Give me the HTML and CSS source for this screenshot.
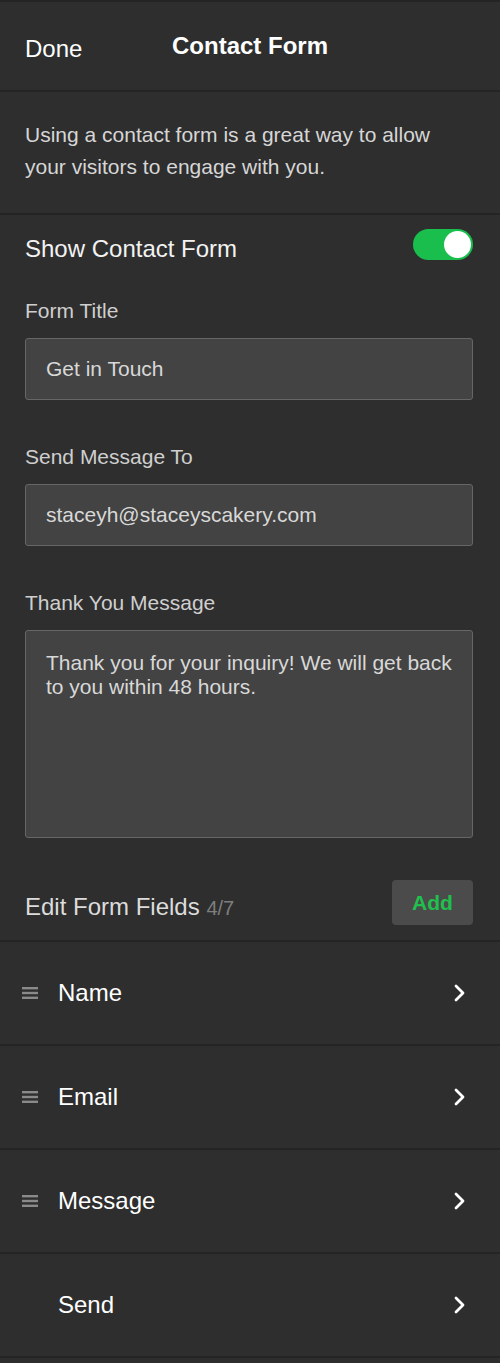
FILE: index.html
```html
<!DOCTYPE html>
<html lang="en">
  <head>
    <meta charset="UTF-8" />
    <meta name="viewport" content="width=device-width, initial-scale=1.0"/>
    <title>Contact Form</title>
    <link rel="stylesheet" href="styles.css">
  </head>
  <body>
    <div class="panel">
      <div class="header">
        <a class="done" href="#">Done</a>
        <h1>Contact Form</h1>
        <span></span>
      </div>

      <p class="intro">Using a contact form is a great way to allow your visitors to engage with you.</p>

      <div class="settings">
        <div class="switch-row">
          <span class="switch-label">Show Contact Form</span>
          <span class="toggle"><span class="knob"></span></span>
        </div>

        <label for="formTitle">Form Title</label>
        <input type="text" id="formTitle" value="Get in Touch" />

        <label for="sendTo">Send Message To</label>
        <input type="text" id="sendTo" value="staceyh@staceyscakery.com" />

        <label for="thanks">Thank You Message</label>
        <textarea id="thanks">Thank you for your inquiry! We will get back to you within 48 hours.</textarea>

        <div class="fields-head">
          <span class="fields-title">Edit Form Fields <span class="count">4/7</span></span>
          <button type="button">Add</button>
        </div>
      </div>

      <ul class="fields">
        <li>
          <svg class="handle" width="16" height="12" viewBox="0 0 16 12"><rect y="0" width="16" height="2.4"/><rect y="4.8" width="16" height="2.4"/><rect y="9.6" width="16" height="2.4"/></svg>
          <span class="name">Name</span>
          <svg class="chevron" width="14" height="18" viewBox="0 0 14 18"><polyline points="3,2 10,9 3,16"/></svg>
        </li>
        <li>
          <svg class="handle" width="16" height="12" viewBox="0 0 16 12"><rect y="0" width="16" height="2.4"/><rect y="4.8" width="16" height="2.4"/><rect y="9.6" width="16" height="2.4"/></svg>
          <span class="name">Email</span>
          <svg class="chevron" width="14" height="18" viewBox="0 0 14 18"><polyline points="3,2 10,9 3,16"/></svg>
        </li>
        <li>
          <svg class="handle" width="16" height="12" viewBox="0 0 16 12"><rect y="0" width="16" height="2.4"/><rect y="4.8" width="16" height="2.4"/><rect y="9.6" width="16" height="2.4"/></svg>
          <span class="name">Message</span>
          <svg class="chevron" width="14" height="18" viewBox="0 0 14 18"><polyline points="3,2 10,9 3,16"/></svg>
        </li>
        <li>
          <span class="handle-space"></span>
          <span class="name">Send</span>
          <svg class="chevron" width="14" height="18" viewBox="0 0 14 18"><polyline points="3,2 10,9 3,16"/></svg>
        </li>
      </ul>
    </div>
  </body>
</html>
```

FILE: styles.css
```css
body {
  margin: 0;
  background: #2e2e2e;
  font-family: "Liberation Sans", Arial, sans-serif;
  color: #fff;
}

.panel {
  border-top: 2px solid #242424;
}

.header {
  display: grid;
  grid-template-columns: 1fr auto 1fr;
  align-items: center;
  height: 88px;
  padding: 0 25px;
  border-bottom: 2px solid #242424;
}

.done {
  color: #fff;
  text-decoration: none;
  font-size: 24px;
  margin-top: 6px;
}

h1 {
  margin: 0;
  font-size: 24px;
  font-weight: bold;
  color: #fff;
}

.intro {
  margin: 0;
  padding: 27px 25px 30px;
  font-size: 21px;
  line-height: 32px;
  color: #d6d6d6;
  border-bottom: 2px solid #242424;
}

.settings {
  padding: 14px 27px 15px 25px;
  display: flex;
  flex-direction: column;
}

.switch-row {
  display: flex;
  justify-content: space-between;
  align-items: flex-start;
  margin-bottom: 36px;
}

.switch-label {
  font-size: 24px;
  line-height: 31px;
  padding-top: 4px;
  color: #f2f2f2;
}

.toggle {
  display: flex;
  justify-content: flex-end;
  align-items: center;
  width: 60px;
  height: 31px;
  padding: 0 2px;
  box-sizing: border-box;
  background: #19be4c;
  border-radius: 16px;
}

.knob {
  width: 27px;
  height: 27px;
  border-radius: 50%;
  background: #fff;
}

label {
  display: block;
  font-size: 21px;
  line-height: 22px;
  color: #cfcfcf;
  margin-bottom: 16px;
}

input[type="text"],
textarea {
  box-sizing: border-box;
  width: 100%;
  height: 62px;
  margin: 0 0 46px;
  padding: 0 20px;
  font-family: inherit;
  font-size: 21px;
  color: #d8d8d8;
  background: #434343;
  border: 1.5px solid #666;
  border-radius: 3px;
  outline: none;
}

textarea {
  height: 208px;
  padding: 20px 20px;
  line-height: 24px;
  resize: none;
  margin-bottom: 42px;
}

.fields-head {
  display: flex;
  justify-content: space-between;
  align-items: center;
}

.fields-title {
  font-size: 24px;
  color: #dcdcdc;
  margin-top: 8px;
}

.count {
  font-size: 20px;
  color: #7e7e7e;
}

button {
  width: 81px;
  height: 45px;
  background: #4b4b4b;
  color: #1fc04d;
  font-family: inherit;
  font-size: 21px;
  font-weight: bold;
  border: none;
  border-radius: 4px;
  cursor: pointer;
}

.fields {
  list-style: none;
  margin: 0;
  padding: 0;
  border-top: 2px solid #242424;
}

.fields li {
  display: flex;
  align-items: center;
  height: 102px;
  padding: 0 33px 0 22px;
  border-bottom: 2px solid #242424;
}

.handle {
  fill: #8a8a8a;
  margin-right: 20px;
}

.handle-space {
  width: 16px;
  margin-right: 20px;
}

.name {
  flex: 1;
  font-size: 24px;
  color: #fff;
}

.chevron {
  fill: none;
  stroke: #fff;
  stroke-width: 2.8;
  stroke-linecap: round;
  stroke-linejoin: round;
}
```
